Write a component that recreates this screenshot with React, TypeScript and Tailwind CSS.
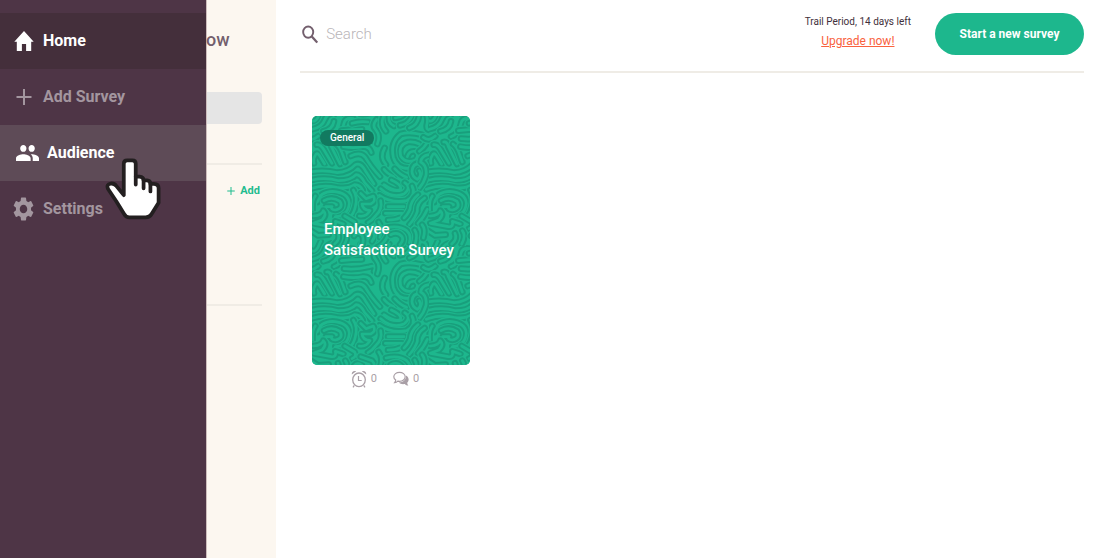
import React from 'react';

interface NavItem {
  label: string;
  icon: React.ReactNode;
  iconClass: string;
  itemClass: string;
}

const HomeIcon = () => (
  <svg viewBox="0 0 20 20" className="h-5 w-5" fill="currentColor" aria-hidden="true">
    <path d="M10 0 .3 10.8h2.5V20h5.1v-7h4.2v7h5.1v-9.2h2.5z" />
  </svg>
);

const PlusIcon = ({ className }: { className: string }) => (
  <svg viewBox="0 0 16 16" className={className} fill="none" stroke="currentColor" strokeWidth="2" aria-hidden="true">
    <path d="M8 0v16M0.5 8h15" />
  </svg>
);

const PeopleIcon = () => (
  <svg viewBox="1 5 22 14" preserveAspectRatio="none" className="h-4 w-[23px]" fill="currentColor" aria-hidden="true">
    <path d="M16 11c1.66 0 2.99-1.34 2.99-3S17.66 5 16 5s-3 1.34-3 3 1.34 3 3 3zm-8 0c1.66 0 2.99-1.34 2.99-3S9.66 5 8 5 5 6.34 5 8s1.34 3 3 3zm0 2c-2.33 0-7 1.17-7 3.5V19h14v-2.500c0-2.330-4.670-3.500-7-3.500zm8 0c-.29 0-.62.02-.97.05 1.160.84 1.970 1.970 1.970 3.450V19h6v-2.500c0-2.330-4.670-3.500-7-3.500z" />
  </svg>
);

const GearIcon = () => (
  <svg viewBox="2 2 20 20" preserveAspectRatio="none" className="h-6 w-[21px]" fill="currentColor" aria-hidden="true">
    <path d="M19.14 12.94c.04-.3.06-.61.06-.94 0-.32-.02-.64-.07-.94l2.03-1.58a.49.49 0 0 0 .12-.61l-1.920-3.320a.488.488 0 0 0-.59-.22l-2.390.960c-.5-.38-1.030-.7-1.620-.940l-.360-2.540a.484.484 0 0 0-.480-.410h-3.840c-.24 0-.43.17-.47.41l-.36 2.540c-.59.24-1.130.57-1.620.940l-2.390-.960c-.22-.08-.47 0-.59.22L2.740 8.870c-.12.21-.08.47.12.61l2.030 1.580c-.05.3-.09.63-.09.940s.02.64.07.940l-2.030 1.580a.49.49 0 0 0-.12.61l1.920 3.320c.12.22.37.29.59.22l2.390-.960c.5.38 1.030.7 1.620.940l.36 2.540c.05.24.24.41.48.41h3.840c.24 0 .44-.17.47-.41l.36-2.540c.59-.24 1.130-.56 1.620-.940l2.390.960c.22.08.47 0 .59-.22l1.920-3.320c.12-.22.07-.47-.12-.61l-2.010-1.580zM12 15.600c-1.980 0-3.600-1.620-3.600-3.600s1.620-3.600 3.600-3.600 3.600 1.620 3.600 3.600-1.620 3.600-3.600 3.600z" />
  </svg>
);

const SearchIcon = () => (
  <svg viewBox="0 0 17 19" className="h-[19px] w-[17px]" fill="none" stroke="currentColor" aria-hidden="true">
    <ellipse cx="6.500" cy="7" rx="5.300" ry="5.900" strokeWidth="2" />
    <path d="M10.300 11.500 16 18" strokeWidth="2.400" />
  </svg>
);

const ClockIcon = () => (
  <svg viewBox="0 0 16 18" className="h-[18px] w-4" fill="none" stroke="currentColor" aria-hidden="true">
    <ellipse cx="8" cy="9.800" rx="6.300" ry="6.800" strokeWidth="1.300" />
    <path d="M7.500 6v4.500h3.200M3.300 15.300 2 17.300M12.700 15.300 14 17.300" strokeWidth="1.200" />
    <path d="M.8 4.600C.4 2 2.500.2 5.200 1.200zM15.200 4.600C15.600 2 13.500.2 10.800 1.200z" fill="currentColor" stroke="none" />
  </svg>
);

const ChatIcon = () => (
  <svg viewBox="0 0 16 16" className="h-4 w-4" aria-hidden="true">
    <path
      d="M12.900 4.500c3.300 1.700 3.500 5.300 1.300 7.200.1 1.200.5 2 1.300 2.800-1.600 0-2.800-.5-3.700-1.500-2.500.5-4.700-.2-5.900-1.500 4.500-.1 7.700-3.300 7-7z"
      fill="currentColor"
    />
    <path
      d="M6.500 1.300c3.200 0 5.700 2 5.700 4.500s-2.500 4.500-5.700 4.500c-.7 0-1.200 0-1.700-.2-.9.900-1.900 1.400-3.100 1.500.7-.8 1-1.500 1-2.500C1.500 8.300.800 7.200.800 5.800c0-2.500 2.500-4.500 5.700-4.500z"
      fill="#ffffff"
      stroke="currentColor"
      strokeWidth="1.200"
    />
  </svg>
);

const HandCursor = () => (
  <svg viewBox="15 24 164 180" className="pointer-events-none absolute left-[105px] top-[158px] h-[62px] w-14" aria-hidden="true">
    <g stroke="#231f20" strokeWidth="11" strokeLinejoin="round" strokeLinecap="round">
      <path
        d="M70 40Q70 30 80 30H95Q105 30 105 40V78H116Q128 79 128 89H138Q148 90 148 99H158Q172 99 172 112V154L151 188Q146 197 134 197H86Q77 197 71 187L48 150 24 114Q18 100 32 98 42 97 48 105L70 132Z"
        fill="#ffffff"
      />
      <path d="M105 78V101M128 89V112M148 99V121" fill="none" />
    </g>
  </svg>
);

const navItems: NavItem[] = [
  { label: 'Home', icon: <HomeIcon />, iconClass: 'w-[23px]', itemClass: 'bg-[#442f3b] text-white' },
  { label: 'Add Survey', icon: <PlusIcon className="h-4 w-4" />, iconClass: 'w-[23px]', itemClass: 'text-[#a3969f]' },
  { label: 'Audience', icon: <PeopleIcon />, iconClass: 'w-[27px] pl-1', itemClass: 'bg-[#5e4b57] text-white' },
  { label: 'Settings', icon: <GearIcon />, iconClass: 'w-[23px]', itemClass: 'text-[#a3969f]' },
];

// centre lines of the doodle strokes, one 351x390 tile
const doodles = [
  // top left
  'M-4 12Q8 22 18 4L26 -14',
  'M0 40Q30 34 38 12Q44 -4 58 -8',
  'M34 46Q62 40 66 16',
  'M66 62Q90 54 96 22Q100 4 124 8',
  'M88 44Q120 40 150 40',
  'M96 68Q134 72 172 62Q196 54 186 76',
  'M120 22Q144 14 168 18',
  'M146 -6Q170 -4 192 -16',
  'M194 10Q178 30 192 42Q206 60 196 84',
  'M214 2Q204 26 222 46',
  'M232 -6Q226 20 246 30',
  // zigzag
  'M6 142Q2 128 10 118Q14 108 22 118L38 144',
  'M14 86Q26 84 36 102L60 142',
  'M44 78Q54 76 58 92L84 144',
  'M72 84Q84 92 92 116L100 138',
  'M94 92Q126 98 152 92Q172 90 178 110',
  'M116 120Q146 106 160 124Q176 152 204 182',
  // waves
  'M-8 168Q36 160 76 170Q110 168 130 146Q146 138 160 164L186 204',
  'M-8 194Q36 182 80 194Q116 194 132 176Q146 176 158 200L180 224',
  'M-8 220Q30 204 74 214Q108 220 128 206Q144 206 152 222',
  // spiral
  'M286 122Q292 104 308 106Q324 116 310 132Q280 144 266 120Q258 86 288 78Q306 76 322 84',
  'M322 106Q336 96 346 80',
  'M312 154Q258 168 244 124Q234 78 266 54Q292 46 330 56',
  'M218 96Q202 124 222 146',
  'M216 160Q226 174 246 182',
  'M248 158Q266 178 284 184',
  // top right
  'M250 6Q276 2 286 -14',
  'M264 28Q292 24 304 -8',
  'M292 36Q318 28 322 -4Q326 -18 340 -8Q350 6 344 28Q342 44 358 42',
  'M334 64Q350 78 370 60',
  // band right
  'M330 140Q300 142 300 166Q300 182 316 190Q332 178 322 164',
  'M350 116Q328 120 326 138Q346 148 342 178Q336 200 322 216',
  // lens
  'M238 192Q270 206 266 220Q250 230 216 206',
  'M206 218Q240 248 276 234Q300 214 278 200',
  'M202 238Q236 262 284 254Q314 236 300 210',
  // c shapes
  'M16 258Q22 228 62 226Q110 230 112 262Q108 300 70 302',
  'M36 254Q60 240 84 256Q96 276 70 282Q54 280 60 272L42 272',
  'M2 282Q0 252 10 240',
  'M124 222Q138 244 130 272Q126 292 112 306',
  // squiggle column
  'M146 232L162 248L184 240Q194 256 176 264L150 264Q152 282 174 284Q162 304 142 300',
  'M206 254Q212 280 192 298Q180 314 168 320',
  'M228 272H276',
  'M220 292H270',
  'M228 312Q250 312 262 306',
  // right column
  'M318 236Q296 254 294 280Q286 298 276 306',
  'M338 246Q314 262 316 286Q310 306 292 326',
  'M346 280Q336 304 318 322',
  // bottom
  'M4 300Q30 298 34 284Q46 296 30 312L4 322L58 332Q74 334 70 316L94 324',
  'M-4 344L18 358L50 356',
  'M98 300L128 318Q136 330 120 338',
  'M100 344Q112 360 98 384',
  'M78 352Q86 370 68 384',
  'M126 360Q136 346 150 358Q158 372 148 396',
  'M146 332L180 344Q194 358 180 376',
  'M200 318Q214 336 204 364',
  'M196 394Q216 384 226 362',
  'M222 336Q260 326 284 344Q300 358 292 380',
  'M236 356Q258 346 270 362Q276 374 264 386',
  'M308 342Q318 356 310 382',
  'M330 326Q342 340 334 366',
];

const DoodlePattern = () => (
  <svg className="absolute inset-0 h-full w-full" aria-hidden="true">
    <defs>
      <g id="doodle-tile" fill="none" strokeLinecap="round" strokeLinejoin="round">
        {doodles.map(d => (
          <g key={d}>
            <path d={d} stroke="#1db78d" strokeWidth="27" />
            <path d={d} stroke="#189f7c" strokeWidth="20" />
            <path d={d} stroke="#1db78d" strokeWidth="8" />
          </g>
        ))}
      </g>
      <pattern id="doodles" width="351" height="390" patternUnits="userSpaceOnUse" patternTransform="scale(0.3333)">
        <rect width="351" height="390" fill="#1db78d" />
        <use href="#doodle-tile" x="351" />
        <use href="#doodle-tile" x="-351" />
        <use href="#doodle-tile" y="390" />
        <use href="#doodle-tile" y="-390" />
        <use href="#doodle-tile" />
      </pattern>
    </defs>
    <rect width="100%" height="100%" fill="url(#doodles)" />
  </svg>
);

const Sidebar: React.FC = () => (
  <nav className="w-[207px] shrink-0 border-r border-[#cdbdbc] bg-[#4e3546] pt-[13px]">
    {navItems.map(item => (
      <a key={item.label} href="#" className={`flex h-14 items-center gap-2 pl-3 font-bold ${item.itemClass}`}>
        <span className={`flex shrink-0 justify-center ${item.iconClass}`}>{item.icon}</span>
        {item.label}
      </a>
    ))}
  </nav>
);

const SurveyCard: React.FC = () => (
  <article className="w-[158px]">
    <div className="relative flex h-[249px] flex-col overflow-hidden rounded-[5px] bg-[#1db78d] text-white">
      <DoodlePattern />
      <span className="relative ml-2 mt-[14px] self-start rounded-full bg-[#127a60] px-[10px] text-[10px] font-medium leading-4">
        General
      </span>
      <h2 className="relative mt-[73px] whitespace-nowrap pl-3 text-[15px] font-medium leading-[21px]">
        Employee
        <br />
        Satisfaction Survey
      </h2>
    </div>
    <div className="mt-[5px] flex justify-center gap-4 pr-3 text-[11px] leading-[18px] text-[#a99fa6]">
      <span className="flex items-center gap-1">
        <ClockIcon />0
      </span>
      <span className="flex items-center gap-1">
        <ChatIcon />0
      </span>
    </div>
  </article>
);

const App: React.FC = () => {
  return (
    <div className="relative flex min-h-screen bg-white font-['Roboto',sans-serif]">
      <Sidebar />
      <aside className="w-[69px] shrink-0 bg-[#fcf7f0] pr-[14px] pt-7">
        <p className="-ml-px text-lg font-medium leading-6 text-[#735f6d]">ow</p>
        <div className="mt-10 h-8 rounded-r bg-[#e5e5e5]" />
        <hr className="mt-[39px] border-t-2 border-[#f0ece5]" />
        <div className="mt-[18px] flex justify-end">
          <button className="flex items-center gap-[5px] whitespace-nowrap pr-[2px] text-[11px] font-bold leading-4 text-[#1fbc8f]">
            <PlusIcon className="h-2 w-2" />
            Add
          </button>
        </div>
        <hr className="mt-[105px] border-t-2 border-[#f0ece5]" />
      </aside>

      <main className="min-w-0 flex-1 pl-6 pr-[10px]">
        <header className="flex h-[73px] items-start border-b-2 border-[#efece6]">
          <label className="ml-[2px] mt-6 flex flex-1 items-center gap-2 text-[#735f6d]">
            <SearchIcon />
            <input
              type="text"
              aria-label="Search"
              placeholder="Search"
              className="w-full text-[15px] font-light leading-5 outline-none placeholder:text-[#b9b5b8]"
            />
          </label>
          <div className="mr-6 mt-[14px] text-center">
            <p className="text-[10px] leading-4 text-[#3f2f3b]">Trail Period, 14 days left</p>
            <a href="#" className="block text-xs leading-[22px] text-[#f9623e] underline">
              Upgrade now!
            </a>
          </div>
          <button className="mt-[13px] h-[42px] w-[149px] rounded-full bg-[#1db78d] text-xs font-bold text-white">
            Start a new survey
          </button>
        </header>
        <section className="pl-3 pt-[43px]">
          <SurveyCard />
        </section>
      </main>

      <HandCursor />
    </div>
  );
};

export default App;
